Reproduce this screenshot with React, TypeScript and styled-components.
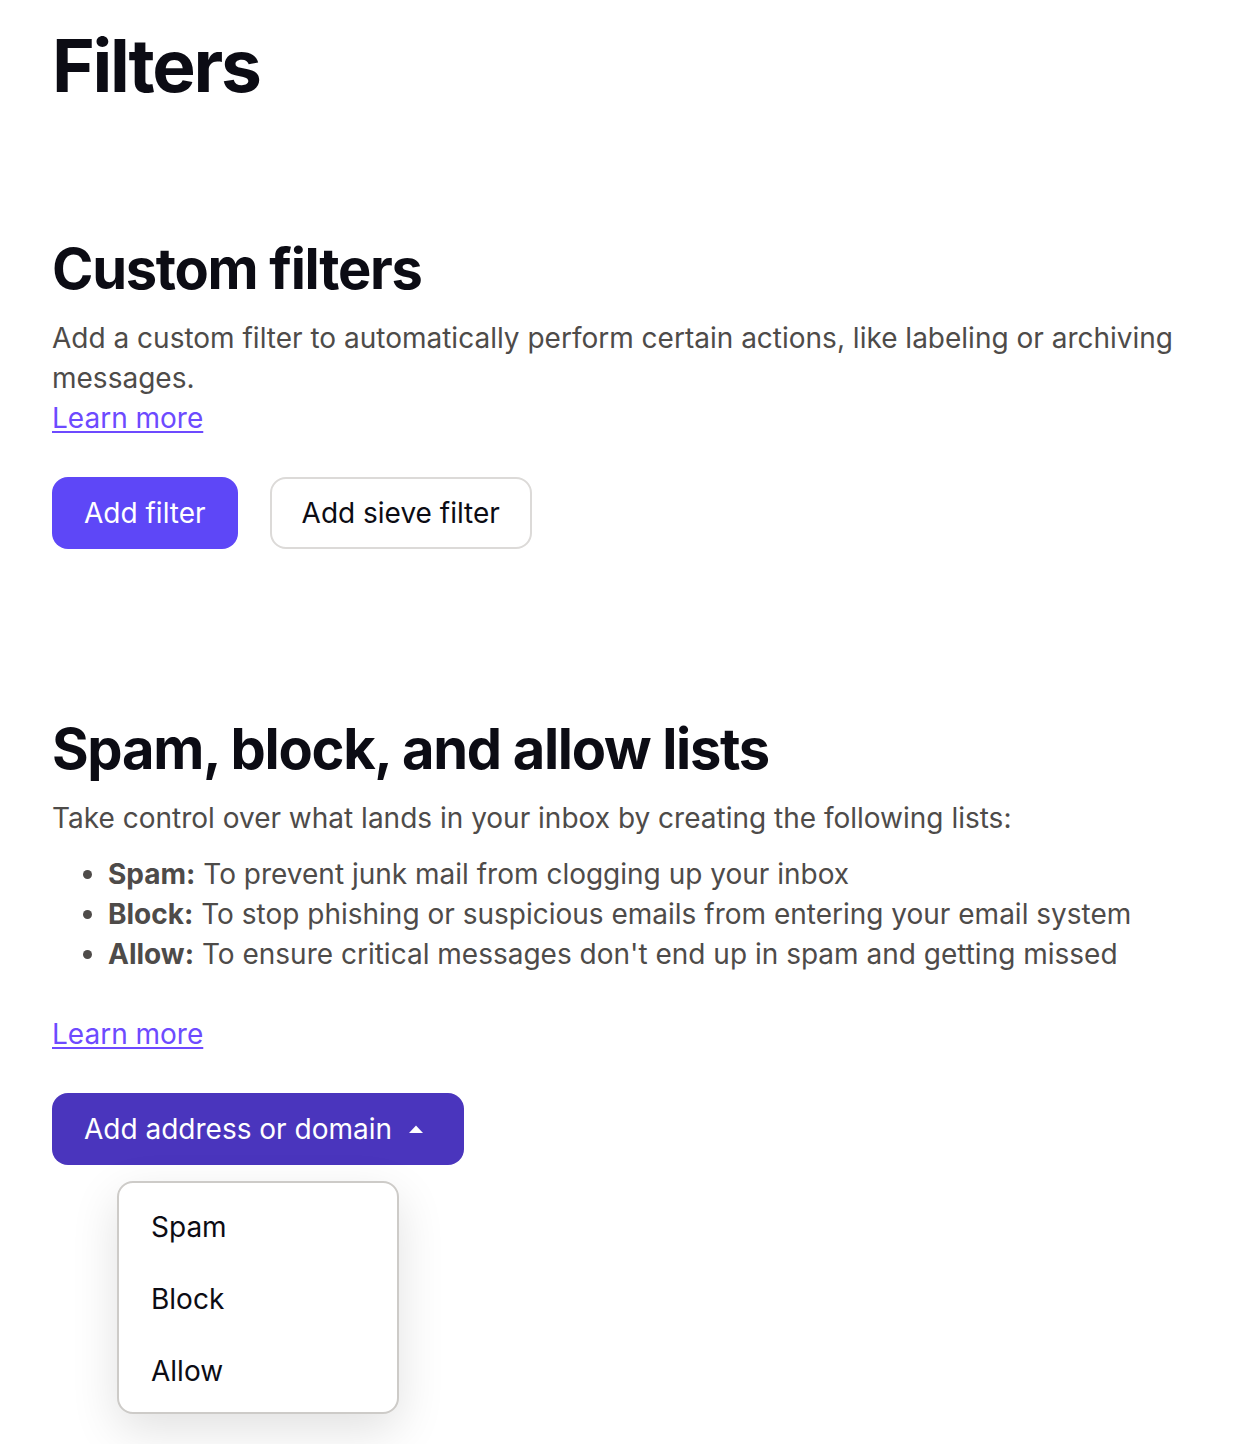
import styled, { createGlobalStyle } from "styled-components";

const GlobalStyle = createGlobalStyle`
  body {
    margin: 0;
    background: #fff;
    font-family: Inter, "Noto Sans", sans-serif;
    color: #4e4b49;
  }
`;

const Page = styled.main`
  min-height: 100vh;
  box-sizing: border-box;
  padding: 22px 52px 40px;
`;

const Title = styled.h1`
  margin: 0;
  font-size: 73px;
  line-height: 1.2;
  font-weight: 700;
  letter-spacing: -2.3px;
  color: #0c0c14;
`;

const Section = styled.section`
  margin-top: ${(p) => p.$top}px;
`;

const SectionTitle = styled.h2`
  margin: 0 0 15px;
  font-size: 56px;
  line-height: 1.2;
  font-weight: 700;
  letter-spacing: -1.3px;
  color: #0c0c14;
`;

const Text = styled.p`
  margin: 0;
  font-size: 28px;
  line-height: 40px;
  color: #4e4b49;
`;

const Link = styled.a`
  display: inline-block;
  font-size: 28px;
  line-height: 40px;
  color: #6d4aff;
  text-decoration: underline;
  text-underline-offset: 3px;
  cursor: pointer;
`;

const List = styled.ul`
  margin: 16px 0 40px;
  padding-left: 56px;
  font-size: 28px;
  line-height: 40px;

  strong {
    font-weight: 700;
  }
`;

const Actions = styled.div`
  display: flex;
  gap: 32px;
  margin-top: 39px;
`;

const Button = styled.button`
  display: inline-flex;
  align-items: center;
  gap: 16px;
  height: 72px;
  padding: 0 ${(p) => (p.$caret ? 38 : 30)}px 0 30px;
  border-radius: 16px;
  font-family: inherit;
  font-size: 28px;
  line-height: 40px;
  cursor: pointer;
  border: 2px solid ${(p) => (p.$variant === "outline" ? "#dcdad8" : "transparent")};
  background: ${(p) =>
    p.$variant === "outline" ? "#fff" : p.$variant === "active" ? "#4a35bd" : "#5e47f7"};
  color: ${(p) => (p.$variant === "outline" ? "#0c0c14" : "#fff")};
`;

const DropdownWrap = styled.div`
  position: relative;
  display: inline-block;
  margin-top: 39px;
`;

const Menu = styled.ul`
  position: absolute;
  top: 88px;
  left: 65px;
  width: 282px;
  margin: 0;
  padding: 8px 0 5px;
  list-style: none;
  background: #fff;
  border: 2px solid #cdcbc8;
  border-radius: 16px;
  box-shadow: 0 16px 48px rgba(0, 0, 0, 0.12);
  box-sizing: border-box;
`;

const MenuItem = styled.li`
  display: flex;
  align-items: center;
  height: 72px;
  padding: 0 32px;
  font-size: 28px;
  color: #0c0c14;
`;

function Caret() {
  return (
    <svg width="16" height="10" viewBox="0 0 16 10" aria-hidden="true">
      <path d="M1 9 L8 1.5 L15 9 Z" fill="#fff" />
    </svg>
  );
}

export default function App() {
  return (
    <>
      <GlobalStyle />
      <Page>
        <Title>Filters</Title>

        <Section $top={126}>
          <SectionTitle>Custom filters</SectionTitle>
          <Text>
            Add a custom filter to automatically perform certain actions, like labeling or archiving messages.
          </Text>
          <Link>Learn more</Link>
          <Actions>
            <Button>Add filter</Button>
            <Button $variant="outline">Add sieve filter</Button>
          </Actions>
        </Section>

        <Section $top={167}>
          <SectionTitle>Spam, block, and allow lists</SectionTitle>
          <Text>Take control over what lands in your inbox by creating the following lists:</Text>
          <List>
            <li>
              <strong>Spam:</strong> To prevent junk mail from clogging up your inbox
            </li>
            <li>
              <strong>Block:</strong> To stop phishing or suspicious emails from entering your email system
            </li>
            <li>
              <strong>Allow:</strong> To ensure critical messages don't end up in spam and getting missed
            </li>
          </List>
          <Link>Learn more</Link>
          <div>
            <DropdownWrap>
              <Button $variant="active" $caret>
                Add address or domain
                <Caret />
              </Button>
              <Menu>
                <MenuItem>Spam</MenuItem>
                <MenuItem>Block</MenuItem>
                <MenuItem>Allow</MenuItem>
              </Menu>
            </DropdownWrap>
          </div>
        </Section>
      </Page>
    </>
  );
}
